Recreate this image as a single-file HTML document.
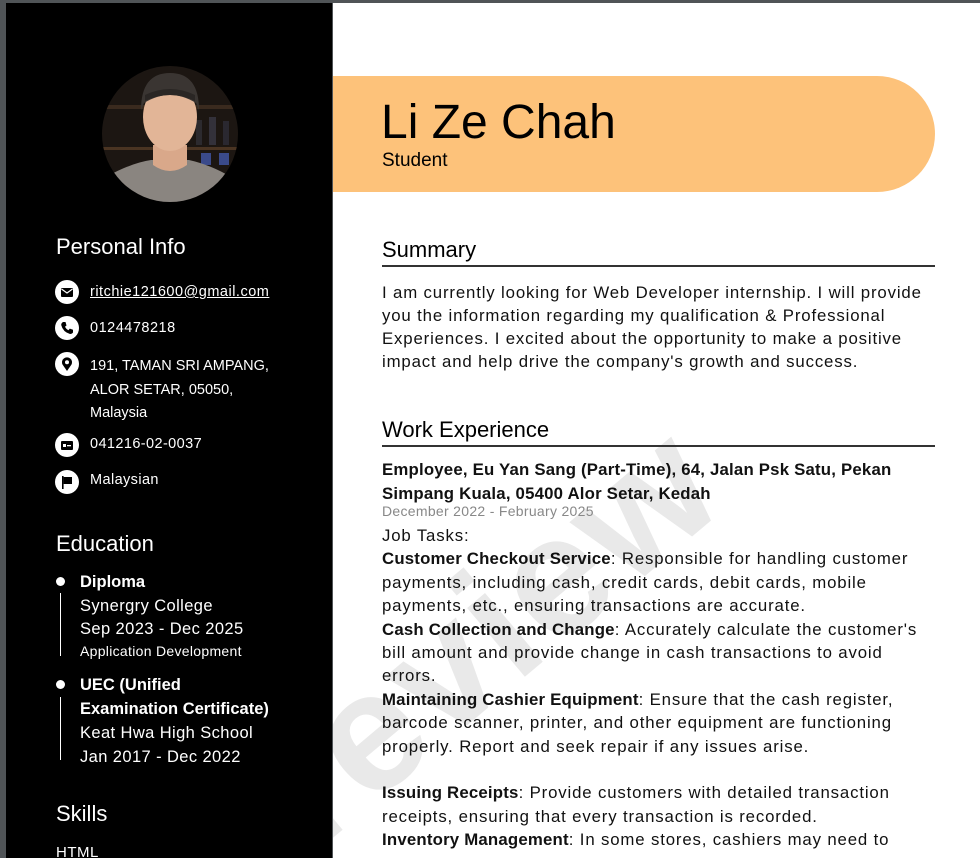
<!DOCTYPE html>
<html><head><meta charset="utf-8"><style>
*{margin:0;padding:0;box-sizing:border-box}
html,body{width:980px;height:858px;overflow:hidden;background:#505457;font-family:"Liberation Sans",sans-serif}
#side{position:absolute;left:6px;top:3px;width:326px;height:855px;background:#000;color:#fff;overflow:hidden}
#main{position:absolute;left:333px;top:3px;width:647px;height:855px;background:#fff;overflow:hidden}
.t{position:absolute;white-space:nowrap}
#main .t{font-size:16.8px;color:#111;line-height:23px;left:49px;letter-spacing:0.85px}
b{font-weight:bold;letter-spacing:0.2px}
.h{font-size:22px!important;color:#000!important;letter-spacing:0px!important}
.rule{position:absolute;left:49px;width:553px;height:2px;background:#333}
.ic{position:absolute;left:49px;width:24px;height:24px;border-radius:50%;background:#fff}
.e{left:74px;font-size:16.5px;line-height:22px}
</style></head><body>
<div id="side">
<svg style="position:absolute;left:95px;top:62px" width="138" height="138" viewBox="0 0 138 138">
<defs><clipPath id="c"><circle cx="69" cy="69" r="68"/></clipPath></defs>
<g clip-path="url(#c)">
<rect width="138" height="138" fill="#1c1612"/>
<rect x="0" y="40" width="138" height="4" fill="#3a2a1e"/>
<rect x="0" y="82" width="138" height="3" fill="#4a3422"/>
<rect x="95" y="55" width="6" height="25" fill="#2c2a2e"/><rect x="108" y="52" width="7" height="28" fill="#33313a"/><rect x="122" y="56" width="6" height="24" fill="#2a2830"/>
<rect x="100" y="88" width="10" height="12" fill="#3a4a8a"/><rect x="118" y="88" width="10" height="12" fill="#3a4a8a"/>
<path d="M-5 140 L5 112 Q30 98 50 95 L88 95 Q110 100 130 112 L145 140Z" fill="#8a8580"/>
<path d="M52 80 L52 100 Q69 112 86 100 L86 80Z" fill="#d9a88a"/>
<ellipse cx="69" cy="52" rx="27" ry="34" fill="#e2b597"/>
<path d="M40 45 Q40 8 69 8 Q98 8 98 45 L95 38 Q69 22 43 38Z" fill="#3a3532"/>
<path d="M44 36 Q69 24 94 36 L94 30 Q69 18 44 30Z" fill="#2a2624"/>
</g></svg>
<div class="t" style="left:50px;top:231px;font-size:22px">Personal Info</div>
<div class="ic" style="top:277px"><svg width="24" height="24"><rect x="6" y="8" width="12" height="9" rx="1" fill="#000"/><path d="M6.5 9 L12 13 L17.5 9" stroke="#fff" stroke-width="1.2" fill="none"/></svg></div>
<div class="t" style="left:84px;top:281px;font-size:14.5px;text-decoration:underline;letter-spacing:0.5px">ritchie121600@gmail.com</div>
<div class="ic" style="top:313px"><svg width="24" height="24"><path d="M8 6 L10.5 6 L11.5 9.5 L10 10.8 Q11.5 13.5 13.4 14.2 L14.8 12.6 L18 13.8 L18 16.5 Q17 18 15 18 Q8 16 6.2 9 Q6.2 7 8 6Z" fill="#000"/></svg></div>
<div class="t" style="left:84px;top:317px;font-size:14.5px;letter-spacing:0.5px">0124478218</div>
<div class="ic" style="top:349px"><svg width="24" height="24"><path d="M12 19 L7.5 12.5 A5 5 0 1 1 16.5 12.5Z" fill="#000"/><circle cx="12" cy="10.3" r="2" fill="#fff"/></svg></div>
<div class="t" style="left:84px;top:352px;font-size:14.5px;line-height:23.5px">191, TAMAN SRI AMPANG,<br>ALOR SETAR, 05050,<br>Malaysia</div>
<div class="ic" style="top:430px"><svg width="24" height="24"><rect x="6" y="8" width="12" height="9" rx="1" fill="#000"/><rect x="8" y="11" width="3" height="3" fill="#fff"/><rect x="12" y="12" width="4" height="1.3" fill="#fff"/></svg></div>
<div class="t" style="left:84px;top:433px;font-size:14.5px;letter-spacing:0.4px">041216-02-0037</div>
<div class="ic" style="top:467px"><svg width="24" height="24"><rect x="7" y="6" width="1.6" height="13" fill="#000"/><path d="M8.6 7 L17 7 L17 14 L8.6 14Z" fill="#000"/></svg></div>
<div class="t" style="left:84px;top:469px;font-size:14.5px;letter-spacing:0.4px">Malaysian</div>

<div class="t" style="left:50px;top:528px;font-size:22px">Education</div>
<div style="position:absolute;left:50px;top:574px;width:9px;height:9px;border-radius:50%;background:#fff"></div>
<div style="position:absolute;left:54px;top:590px;width:1px;height:63px;background:#fff"></div>
<div class="t e" style="top:568px;font-weight:bold">Diploma</div>
<div class="t e" style="top:592px;line-height:23px;letter-spacing:0.4px">Synergry College<br>Sep 2023 - Dec 2025</div>
<div class="t" style="left:74px;top:640px;font-size:14px;letter-spacing:0.3px">Application Development</div>
<div style="position:absolute;left:50px;top:677px;width:9px;height:9px;border-radius:50%;background:#fff"></div>
<div style="position:absolute;left:54px;top:694px;width:1px;height:63px;background:#fff"></div>
<div class="t e" style="top:671px;font-weight:bold;line-height:23.5px">UEC (Unified<br>Examination Certificate)</div>
<div class="t e" style="top:718px;line-height:24px;letter-spacing:0.4px">Keat Hwa High School<br>Jan 2017 - Dec 2022</div>
<div class="t" style="left:50px;top:798px;font-size:22px">Skills</div>
<div class="t" style="left:50px;top:841px;font-size:15px;letter-spacing:0.5px">HTML</div>
</div>

<div id="main">
<div class="t" style="left:0;top:700px;height:170px;font-size:170px!important;line-height:170px!important;font-weight:bold;color:#e9e9e9!important;transform:rotate(-40deg);transform-origin:left bottom;letter-spacing:2px!important">review</div>
<div style="position:absolute;left:0;top:73px;width:602px;height:116px;background:#fdc27a;border-radius:0 58px 58px 0"></div>
<div class="t" style="left:48px;top:92px;font-size:48px;color:#000;line-height:56px;letter-spacing:0!important">Li Ze Chah</div>
<div class="t" style="left:49px;top:146px;font-size:19px;color:#000;letter-spacing:0!important">Student</div>

<div class="t h" style="top:234px;line-height:26px">Summary</div>
<div class="rule" style="top:262px"></div>
<div class="t" style="top:278px">I am currently looking for Web Developer internship. I will provide<br>you the information regarding my qualification &amp; Professional<br>Experiences. I excited about the opportunity to make a positive<br>impact and help drive the company's growth and success.</div>

<div class="t h" style="top:414px;line-height:26px">Work Experience</div>
<div class="rule" style="top:442px"></div>
<div class="t" style="top:455px;line-height:24px;letter-spacing:0!important"><b>Employee, Eu Yan Sang (Part-Time), 64, Jalan Psk Satu, Pekan<br>Simpang Kuala, 05400 Alor Setar, Kedah</b></div>
<div class="t" style="top:499px;font-size:14px!important;color:#888!important;line-height:18px;letter-spacing:0.3px!important">December 2022 - February 2025</div>
<div class="t" style="top:521px;line-height:23.4px">Job Tasks:<br><b>Customer Checkout Service</b>: Responsible for handling customer<br>payments, including cash, credit cards, debit cards, mobile<br>payments, etc., ensuring transactions are accurate.<br><b>Cash Collection and Change</b>: Accurately calculate the customer's<br>bill amount and provide change in cash transactions to avoid<br>errors.<br><b>Maintaining Cashier Equipment</b>: Ensure that the cash register,<br>barcode scanner, printer, and other equipment are functioning<br>properly. Report and seek repair if any issues arise.<br>&nbsp;<br><b>Issuing Receipts</b>: Provide customers with detailed transaction<br>receipts, ensuring that every transaction is recorded.<br><b>Inventory Management</b>: In some stores, cashiers may need to</div>
</div>
</body></html>
